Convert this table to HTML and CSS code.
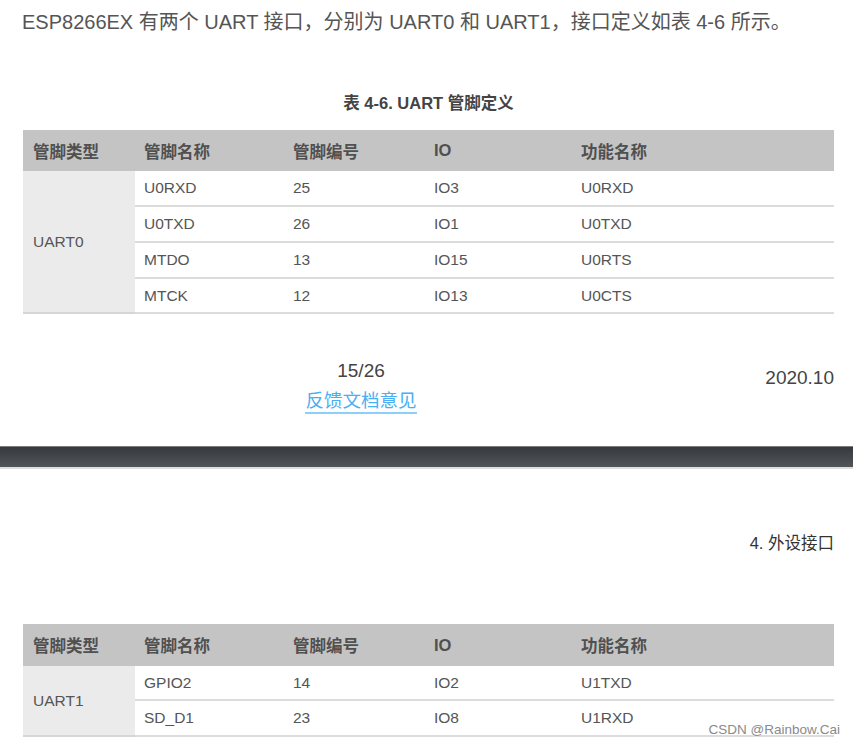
FILE: index.html
```html
<!DOCTYPE html>
<html lang="zh">
<head>
<meta charset="utf-8">
<title>UART 管脚定义</title>
<link rel="stylesheet" href="styles.css">
</head>
<body>
<div class="page">
  <p class="intro">ESP8266EX 有两个 UART 接口，分别为 UART0 和 UART1，接口定义如表 4-6 所示。</p>
  <div class="caption">表 4-6. UART 管脚定义</div>
  <table class="pins">
    <colgroup>
      <col class="c1"><col class="c2"><col class="c3"><col class="c4"><col class="c5">
    </colgroup>
    <thead>
      <tr><th>管脚类型</th><th>管脚名称</th><th>管脚编号</th><th>IO</th><th>功能名称</th></tr>
    </thead>
    <tbody>
      <tr><td class="group" rowspan="4">UART0</td><td>U0RXD</td><td>25</td><td>IO3</td><td>U0RXD</td></tr>
      <tr><td>U0TXD</td><td>26</td><td>IO1</td><td>U0TXD</td></tr>
      <tr><td>MTDO</td><td>13</td><td>IO15</td><td>U0RTS</td></tr>
      <tr class="last"><td>MTCK</td><td>12</td><td>IO13</td><td>U0CTS</td></tr>
    </tbody>
  </table>
  <div class="footer">
    <div class="pageno">
      <span class="num">15/26</span>
      <a class="feedback" href="#">反馈文档意见</a>
    </div>
    <span class="date">2020.10</span>
  </div>
</div>
<div class="band"></div>
<div class="page second">
  <div class="chapter">4. 外设接口</div>
  <div class="table-wrap">
    <table class="pins two">
      <colgroup>
        <col class="c1"><col class="c2"><col class="c3"><col class="c4"><col class="c5">
      </colgroup>
      <thead>
        <tr><th>管脚类型</th><th>管脚名称</th><th>管脚编号</th><th>IO</th><th>功能名称</th></tr>
      </thead>
      <tbody>
        <tr><td class="group" rowspan="2">UART1</td><td>GPIO2</td><td>14</td><td>IO2</td><td>U1TXD</td></tr>
        <tr class="last"><td>SD_D1</td><td>23</td><td>IO8</td><td>U1RXD</td></tr>
      </tbody>
    </table>
    <span class="watermark">CSDN @Rainbow.Cai</span>
  </div>
</div>
</body>
</html>
```
FILE: styles.css
```css
html, body {
  margin: 0;
  padding: 0;
  background: #ffffff;
}
body {
  width: 853px;
  height: 747px;
  overflow: hidden;
  font-family: "Liberation Sans", "Noto Sans CJK SC", sans-serif;
  color: #555555;
}
.page {
  padding: 0 19px 0 23px;
}
.intro {
  margin: 0 0 0 -1px;
  padding-top: 9px;
  font-size: 20px;
  line-height: 26px;
  color: #555555;
  white-space: nowrap;
}
.caption {
  margin-top: 58px;
  text-align: center;
  font-size: 16.5px;
  line-height: 20px;
  font-weight: bold;
  color: #444444;
}
.pins {
  margin-top: 17px;
  width: 811px;
  border-collapse: collapse;
  table-layout: fixed;
}
.pins .c1 { width: 112px; }
.pins .c2 { width: 149px; }
.pins .c3 { width: 141px; }
.pins .c4 { width: 147px; }
.pins .c5 { width: 262px; }
.pins th {
  background: #c4c4c4;
  height: 41px;
  padding: 0 0 0 9px;
  text-align: left;
  font-size: 16.5px;
  font-weight: bold;
  color: #505050;
}
.pins th:first-child { padding-left: 10px; }
.pins td {
  height: 34px;
  padding: 0 0 0 9px;
  font-size: 15.5px;
  color: #555555;
  border-bottom: 2px solid #dcdcdc;
}
.pins tr.last td { height: 33px; }
.pins td.group {
  background: #ebebeb;
  padding-left: 10px;
  border-bottom: 2px solid #d6d6d6;
}
.footer {
  display: flex;
  align-items: flex-start;
  margin-top: 46px;
  padding-left: 282px;
}
.pageno {
  display: flex;
  flex-direction: column;
  align-items: center;
  width: 112px;
}
.num {
  font-size: 19px;
  line-height: 22px;
  color: #444444;
}
.feedback {
  margin-top: 8px;
  font-size: 18.5px;
  line-height: 21px;
  color: #4aaef2;
  text-decoration: none;
  border-bottom: 2px solid #8ccff8;
  padding-bottom: 1px;
}
.date {
  margin-left: auto;
  margin-top: 7px;
  font-size: 19px;
  line-height: 22px;
  color: #444444;
}
.band {
  margin-top: 32px;
  height: 20px;
  background: linear-gradient(#36393c, #50555a);
  border-top: 1px solid #7a7d80;
  border-bottom: 2px solid #dedede;
}
.chapter {
  margin-top: 64px;
  text-align: right;
  font-size: 16.5px;
  line-height: 20px;
  color: #333333;
}
.table-wrap {
  position: relative;
}
.pins.two {
  margin-top: 71px;
}
.pins.two th { height: 42px; }
.pins.two td { height: 33px; }
.pins.two tr.last td { height: 34px; }
.watermark {
  position: absolute;
  right: -6px;
  bottom: -1px;
  font-size: 13.5px;
  line-height: 16px;
  color: #8a8a8a;
  text-shadow: 0 0 2px #ffffff;
}
```
